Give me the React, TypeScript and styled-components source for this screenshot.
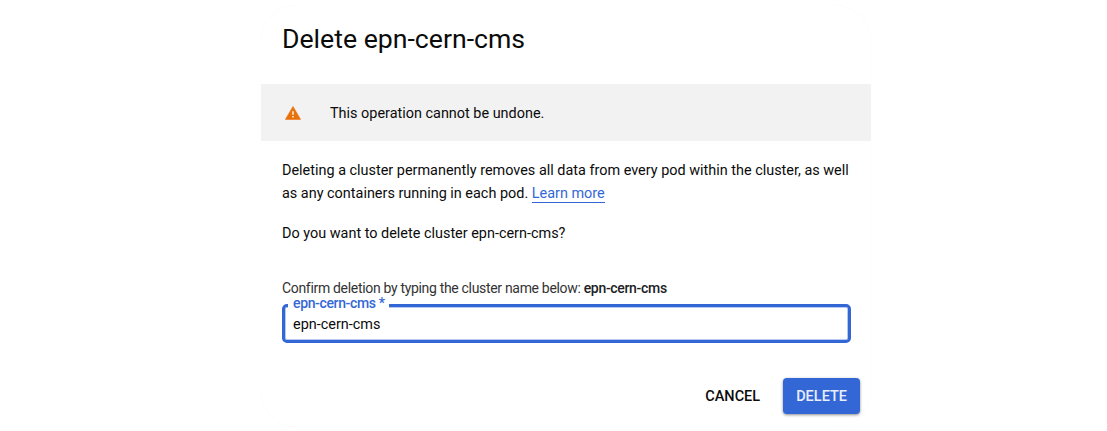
import React from "react";
import styled, { createGlobalStyle } from "styled-components";

const GlobalStyle = createGlobalStyle`
  * { box-sizing: border-box; }
  body { margin: 0; background: #fff; overflow: hidden; font-family: Roboto, "Liberation Sans", sans-serif; color: #0b0b0b; }
`;

const Page = styled.div`
  display: flow-root;
  height: 431px;
  background: #fff;
`;

const Dialog = styled.main`
  width: 610px;
  height: 422px;
  margin: 5px 0 0 261px;
  display: flex;
  flex-direction: column;
  background: #fff;
  border-radius: 36px;
  box-shadow: 0 0 1px rgba(0, 0, 0, 0.06);
`;

const Title = styled.h1`
  margin: 0;
  flex: none;
  height: 79px;
  padding: 16px 21px 0;
  font-size: 26.65px;
  line-height: 36px;
  font-weight: 400;
  white-space: nowrap;
`;

const Warning = styled.div`
  flex: none;
  height: 57px;
  padding-left: 24px;
  display: flex;
  align-items: center;
  gap: 29px;
  background: #f2f2f2;
  border-bottom: 0 solid #f9f9f9;
  font-size: 14.43px;
  line-height: 19px;
  span { padding-top: 1px; }
`;

const WarningIcon = styled.svg`
  width: 16px;
  height: 14px;
  flex: none;
`;

const Body = styled.section`
  padding: 18px 20px 0 21px;
  font-size: 14.43px;
  line-height: 23px;
  white-space: nowrap;
`;

const Paragraph = styled.p<{ $gap?: number }>`
  margin: ${(p) => p.$gap ?? 0}px 0 0;
`;

const Link = styled.a`
  color: #3367d6;
  text-decoration: none;
  display: inline-block;
  line-height: 17px;
  border-bottom: 1px solid #3367d6;
`;

const Prompt = styled.p`
  margin: 32px 0 0;
  font-size: 14px;
  letter-spacing: -0.32px;
  color: #333;
  b { font-weight: 500; color: #202124; }
`;

const Field = styled.fieldset`
  margin: -4px 0 0;
  padding: 0 8px;
  height: 47px;
  min-width: 0;
  border: 3px solid #3367d6;
  border-radius: 5px;
  box-shadow: inset 0 0 0 1px rgba(51, 103, 214, 0.35);
`;

const FieldLabel = styled.legend`
  margin-left: -5px;
  padding: 0 4px 4px 5px;
  background: #fff;
  font-size: 14px;
  letter-spacing: -0.36px;
  font-weight: 500;
  line-height: 14px;
  color: #3367d6;
`;

const Input = styled.input`
  display: block;
  width: 100%;
  height: 24px;
  margin-top: -1px;
  padding: 0;
  border: 0;
  outline: 0;
  background: transparent;
  font: 400 14.43px/24px Roboto, sans-serif;
  color: #0b0b0b;
`;

const Actions = styled.footer`
  display: flex;
  justify-content: flex-end;
  gap: 10px;
  padding-right: 11px;
  margin-top: 35px;
`;

const Button = styled.button<{ $primary?: boolean }>`
  height: 36px;
  padding: 1px 13px 0;
  border: 0;
  border-radius: 4px;
  font: 500 14.5px/36px Roboto, sans-serif;
  color: ${(p) => (p.$primary ? "#e9effb" : "#0b0b0b")};
  background: ${(p) => (p.$primary ? "#3367d6" : "transparent")};
  box-shadow: ${(p) => (p.$primary ? "0 1px 3px rgba(0, 0, 0, 0.45)" : "none")};
`;

export default function App() {
  return (
    <Page>
      <GlobalStyle />
      <Dialog>
        <Title>Delete epn-cern-cms</Title>
        <Warning>
          <WarningIcon viewBox="0 0 16 14">
            <path d="M8 0.4 15.6 13.4H0.4Z" fill="#e8710a" stroke="#e8710a" strokeWidth="0.6" strokeLinejoin="round" />
            <path d="M7.3 5.3h1.4v3.4H7.3zM7.3 10.1h1.4v1.5H7.3z" fill="#fff" />
          </WarningIcon>
          <span>This operation cannot be undone.</span>
        </Warning>
        <Body>
          <Paragraph>
            Deleting a cluster permanently removes all data from every pod within the cluster, as well
            <br />
            as any containers running in each pod. <Link>Learn more</Link>
          </Paragraph>
          <Paragraph $gap={17}>Do you want to delete cluster epn-cern-cms?</Paragraph>
          <Prompt>
            Confirm deletion by typing the cluster name below: <b>epn-cern-cms</b>
          </Prompt>
          <Field>
            <FieldLabel>epn-cern-cms *</FieldLabel>
            <Input defaultValue="epn-cern-cms" />
          </Field>
        </Body>
        <Actions>
          <Button>CANCEL</Button>
          <Button $primary>DELETE</Button>
        </Actions>
      </Dialog>
    </Page>
  );
}
